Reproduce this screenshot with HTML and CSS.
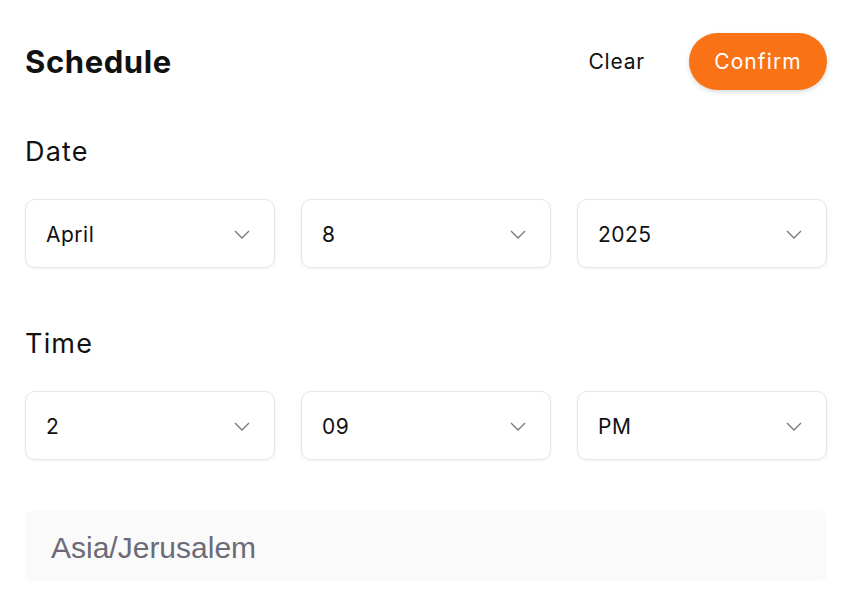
FILE: index.html
```html
<!DOCTYPE html>
<html>
<head>
<meta charset="utf-8">
<link rel="stylesheet" href="styles.css">
</head>
<body>
<div class="page">
  <header class="header">
    <h1 class="title">Schedule</h1>
    <div class="actions">
      <button class="btn-clear">Clear</button>
      <button class="btn-confirm">Confirm</button>
    </div>
  </header>

  <section class="group">
    <h2 class="label">Date</h2>
    <div class="row">
      <div class="select"><span>April</span><svg class="chev" viewBox="0 0 16 9" width="16" height="9"><path d="M1 1l7 7 7-7" fill="none" stroke="#7a7a7a" stroke-width="1.4"/></svg></div>
      <div class="select"><span>8</span><svg class="chev" viewBox="0 0 16 9" width="16" height="9"><path d="M1 1l7 7 7-7" fill="none" stroke="#7a7a7a" stroke-width="1.4"/></svg></div>
      <div class="select"><span>2025</span><svg class="chev" viewBox="0 0 16 9" width="16" height="9"><path d="M1 1l7 7 7-7" fill="none" stroke="#7a7a7a" stroke-width="1.4"/></svg></div>
    </div>
  </section>

  <section class="group">
    <h2 class="label">Time</h2>
    <div class="row">
      <div class="select"><span>2</span><svg class="chev" viewBox="0 0 16 9" width="16" height="9"><path d="M1 1l7 7 7-7" fill="none" stroke="#7a7a7a" stroke-width="1.4"/></svg></div>
      <div class="select"><span>09</span><svg class="chev" viewBox="0 0 16 9" width="16" height="9"><path d="M1 1l7 7 7-7" fill="none" stroke="#7a7a7a" stroke-width="1.4"/></svg></div>
      <div class="select"><span>PM</span><svg class="chev" viewBox="0 0 16 9" width="16" height="9"><path d="M1 1l7 7 7-7" fill="none" stroke="#7a7a7a" stroke-width="1.4"/></svg></div>
    </div>
  </section>

  <div class="tz">Asia/Jerusalem</div>
</div>
</body>
</html>
```
FILE: styles.css
```css
html, body {
  margin: 0;
  padding: 0;
  background: #ffffff;
}
body {
  font-family: Inter, "Open Sans", sans-serif;
  color: #111111;
}
.page {
  padding: 33px 32px 0 25px;
}
.header {
  display: flex;
  align-items: center;
  justify-content: space-between;
  height: 57px;
}
.title {
  margin: 0;
  font-size: 31px;
  font-weight: 700;
  letter-spacing: 0.6px;
}
.actions {
  display: flex;
  align-items: center;
  gap: 44px;
}
.btn-clear {
  border: none;
  background: none;
  padding: 0;
  font-family: inherit;
  font-size: 21px;
  letter-spacing: 0.8px;
  color: #111;
}
.btn-confirm {
  border: none;
  background: #f97316;
  color: #fff;
  font-family: inherit;
  font-size: 21px;
  letter-spacing: 1.1px;
  height: 57px;
  width: 138px;
  padding: 0;
  border-radius: 29px;
  box-shadow: 0 2px 5px rgba(0,0,0,0.15);
}
.group {
  margin-top: 45px;
}
.group + .group {
  margin-top: 59px;
}
.label {
  margin: 0;
  font-size: 27px;
  font-weight: 400;
  letter-spacing: 1.2px;
  line-height: 34px;
}
.row {
  display: grid;
  grid-template-columns: repeat(3, 1fr);
  gap: 26px;
  margin-top: 30px;
}
.select {
  height: 69px;
  box-sizing: border-box;
  border: 1px solid #e6e6e6;
  border-radius: 10px;
  box-shadow: 0 1px 3px rgba(0,0,0,0.06);
  display: flex;
  align-items: center;
  justify-content: space-between;
  padding: 2px 24px 0 20px;
  font-size: 21px;
  letter-spacing: 0.5px;
}
.chev {
  display: block;
}
.tz {
  margin-top: 51px;
  height: 70px;
  background: #fafafa;
  border-radius: 6px;
  display: flex;
  align-items: center;
  padding: 3px 0 0 26px;
  box-sizing: border-box;
  font-family: "Liberation Sans", Arial, sans-serif;
  font-size: 30px;
  color: #6b6b78;
}
```
